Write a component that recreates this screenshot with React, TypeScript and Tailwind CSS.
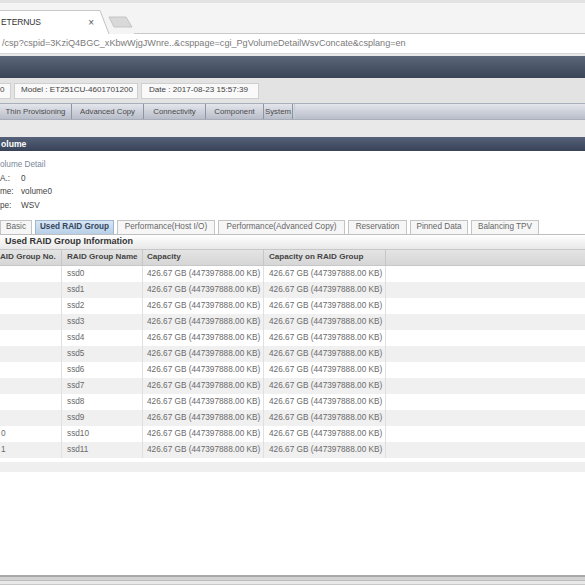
const menus = [
  { label: 'Thin Provisioning', w: 'w-[72px]' },
  { label: 'Advanced Copy', w: 'w-[72px]' },
  { label: 'Connectivity', w: 'w-[62px]' },
  { label: 'Component', w: 'w-[58px]' },
  { label: 'System', w: 'w-[29px]' },
];

const tabs = [
  { label: 'Basic', w: 'w-[32px]' },
  { label: 'Used RAID Group', w: 'w-[79px]', active: true },
  { label: 'Performance(Host I/O)', w: 'w-[98px]' },
  { label: 'Performance(Advanced Copy)', w: 'w-[127px]' },
  { label: 'Reservation', w: 'w-[59px]' },
  { label: 'Pinned Data', w: 'w-[58px]' },
  { label: 'Balancing TPV', w: 'w-[68px]' },
];

const rows = Array.from({ length: 12 }, (_, i) => ({
  no: i >= 10 ? String(i - 10) : '',
  name: `ssd${i}`,
  cap: '426.67 GB (447397888.00 KB)',
}));

export default function App() {
  return (
    <div className="w-[585px] h-[585px] overflow-hidden bg-white flex flex-col font-['Liberation_Sans',Arial,sans-serif] text-[#444]">
      {/* browser tab strip */}
      <div className="h-[34px] bg-[#f4f4f4] border-t-[3px] border-[#e2e2e2] flex items-end shrink-0">
        <div className="w-[98px] h-[24px] bg-white border-t border-[#c9c9c9] flex items-center justify-between pl-[1px] pr-[4px]">
          <span className="text-[8.5px] text-[#333] tracking-[-0.1px]">ETERNUS</span>
          <span className="text-[10px] leading-none text-[#555]">×</span>
        </div>
        <svg width="12" height="24" viewBox="0 0 12 24" className="block">
          <path d="M0 0.5 L2 0.5 L11 24 L0 24 Z" fill="#fff" />
          <path d="M0 0.5 L2 0.5 L11 24" fill="none" stroke="#c2c2c2" />
        </svg>
        <svg width="26" height="24" viewBox="0 0 26 24" className="block -ml-[2px]">
          <path d="M1 7 L18 7 L24 17 L6 17 Z" fill="#d9d9d9" stroke="#c4c4c4" />
        </svg>
        <div className="flex-1 h-full border-b border-[#c9c9c9]" />
      </div>

      {/* address bar */}
      <div className="h-[20px] bg-white border-b border-[#d6d6d6] flex items-center pl-[2px] shrink-0">
        <span className="text-[9.1px] text-[#7a7a7a] whitespace-nowrap">
          /csp?cspid=3KziQ4BGC_xKbwWjgJWnre..&amp;csppage=cgi_PgVolumeDetailWsvConcate&amp;csplang=en
        </span>
      </div>
      <div className="h-[2px] bg-[#e9e9e9] shrink-0" />

      {/* dark title bar */}
      <div className="h-[22px] bg-gradient-to-b from-[#5b6679] to-[#3a4457] shrink-0" />

      {/* info band */}
      <div className="h-[25px] bg-[#e3e3e3] flex items-center gap-[3px] shrink-0">
        <div className="w-[11px] h-[16px] bg-[#f9f9f9] border border-[#cfcfcf] border-l-0 flex items-center text-[8.1px]">0</div>
        <div className="w-[124px] h-[16px] bg-[#f9f9f9] border border-[#cfcfcf] flex items-center pl-[6px] text-[8.1px] whitespace-nowrap">
          Model : ET251CU-4601701200
        </div>
        <div className="w-[118px] h-[16px] bg-[#f9f9f9] border border-[#cfcfcf] flex items-center pl-[7px] text-[8.1px] whitespace-nowrap">
          Date : 2017-08-23 15:57:39
        </div>
      </div>

      {/* menu bar */}
      <div className="h-[17px] bg-gradient-to-b from-[#e4e6ec] to-[#b8bdc9] border-y border-[#a9aebb] flex shrink-0">
        {menus.map(m => (
          <div key={m.label} className={`${m.w} h-full border-r border-[#8f95a3] flex items-center justify-center text-[7.8px] text-[#4a4a4a] whitespace-nowrap`}>
            {m.label}
          </div>
        ))}
        <div className="w-[2px] h-full border-r border-[#c8ccd5]" />
      </div>

      <div className="h-[17px] bg-[#e9e9e9] shrink-0" />

      {/* section header */}
      <div className="h-[14px] bg-gradient-to-b from-[#56627a] to-[#384257] flex items-center pl-[1px] shrink-0">
        <span className="text-[8.6px] font-bold text-white">olume</span>
      </div>

      {/* detail */}
      <div className="h-[69px] bg-white pt-[8px] flex flex-col gap-[2.6px] text-[8.2px] shrink-0">
        <div className="text-[#7a8799] h-[11px] leading-[11px]">olume Detail</div>
        <div className="flex h-[11px] leading-[11px]"><span className="w-[21px] text-[#444]">A.:</span><span>0</span></div>
        <div className="flex h-[11px] leading-[11px]"><span className="w-[21px] text-[#444]">me:</span><span>volume0</span></div>
        <div className="flex h-[11px] leading-[11px]"><span className="w-[21px] text-[#444]">pe:</span><span>WSV</span></div>
      </div>

      {/* tabs */}
      <div className="h-[15px] flex items-end gap-[3px] border-b border-[#bfbfbf] shrink-0">
        {tabs.map(t => (
          <div
            key={t.label}
            className={
              t.active
                ? `${t.w} h-[14px] bg-gradient-to-b from-[#d8e6f4] to-[#b7cfe8] border border-b-0 border-[#9fb6d1] flex items-center justify-center text-[8.2px] font-bold text-[#33465e] whitespace-nowrap`
                : `${t.w} h-[14px] bg-[#f6f6f6] border border-b-0 border-[#c4c4c4] flex items-center justify-center text-[8.2px] text-[#666] whitespace-nowrap`
            }
          >
            {t.label}
          </div>
        ))}
      </div>

      {/* information title */}
      <div className="h-[14px] bg-gradient-to-b from-white to-[#e8e8e8] flex items-center pl-[5px] shrink-0">
        <span className="text-[9px] font-bold text-[#333]">Used RAID Group Information</span>
      </div>

      {/* table */}
      <div className="shrink-0">
        <div className="h-[17px] bg-gradient-to-b from-[#e4e4e4] to-[#d6d6d6] border-y border-[#c7c7c7] flex text-[8.1px] font-bold text-[#444]">
          <div className="w-[62px] border-r border-[#c7c7c7] flex items-center whitespace-nowrap overflow-hidden">AID Group No.</div>
          <div className="w-[81px] border-r border-[#c7c7c7] flex items-center pl-[5px] whitespace-nowrap">RAID Group Name</div>
          <div className="w-[121px] border-r border-[#c7c7c7] flex items-center pl-[4px] whitespace-nowrap">Capacity</div>
          <div className="w-[122px] border-r border-[#c7c7c7] flex items-center pl-[5px] whitespace-nowrap">Capacity on RAID Group</div>
          <div className="flex-1" />
        </div>
        {rows.map((r, i) => (
          <div key={r.name} className={`h-[16px] flex text-[8.25px] text-[#6a6a6a] ${i % 2 ? 'bg-[#f0f0f0]' : 'bg-white'}`}>
            <div className="w-[62px] border-r border-[#e0e0e0] flex items-center pl-[1px]">{r.no}</div>
            <div className="w-[81px] border-r border-[#e0e0e0] flex items-center pl-[5px]">{r.name}</div>
            <div className="w-[121px] border-r border-[#e0e0e0] flex items-center pl-[4px] whitespace-nowrap">{r.cap}</div>
            <div className="w-[122px] border-r border-[#e0e0e0] flex items-center pl-[5px] whitespace-nowrap">{r.cap}</div>
            <div className="flex-1" />
          </div>
        ))}
      </div>

      <div className="h-[4px] bg-white shrink-0" />
      <div className="h-[10px] bg-[#efefef] shrink-0" />
      <div className="flex-1 bg-white" />

      {/* bottom edge */}
      <div className="h-[10px] flex flex-col shrink-0">
        <div className="h-[2px] bg-[#a8a8a8]" />
        <div className="h-[3px] bg-[#d2d2d2]" />
        <div className="h-[1px] bg-[#bdbdbd]" />
        <div className="h-[3px] bg-[#e8e8e8]" />
        <div className="h-[1px] bg-[#c8c8c8]" />
      </div>
    </div>
  );
}
